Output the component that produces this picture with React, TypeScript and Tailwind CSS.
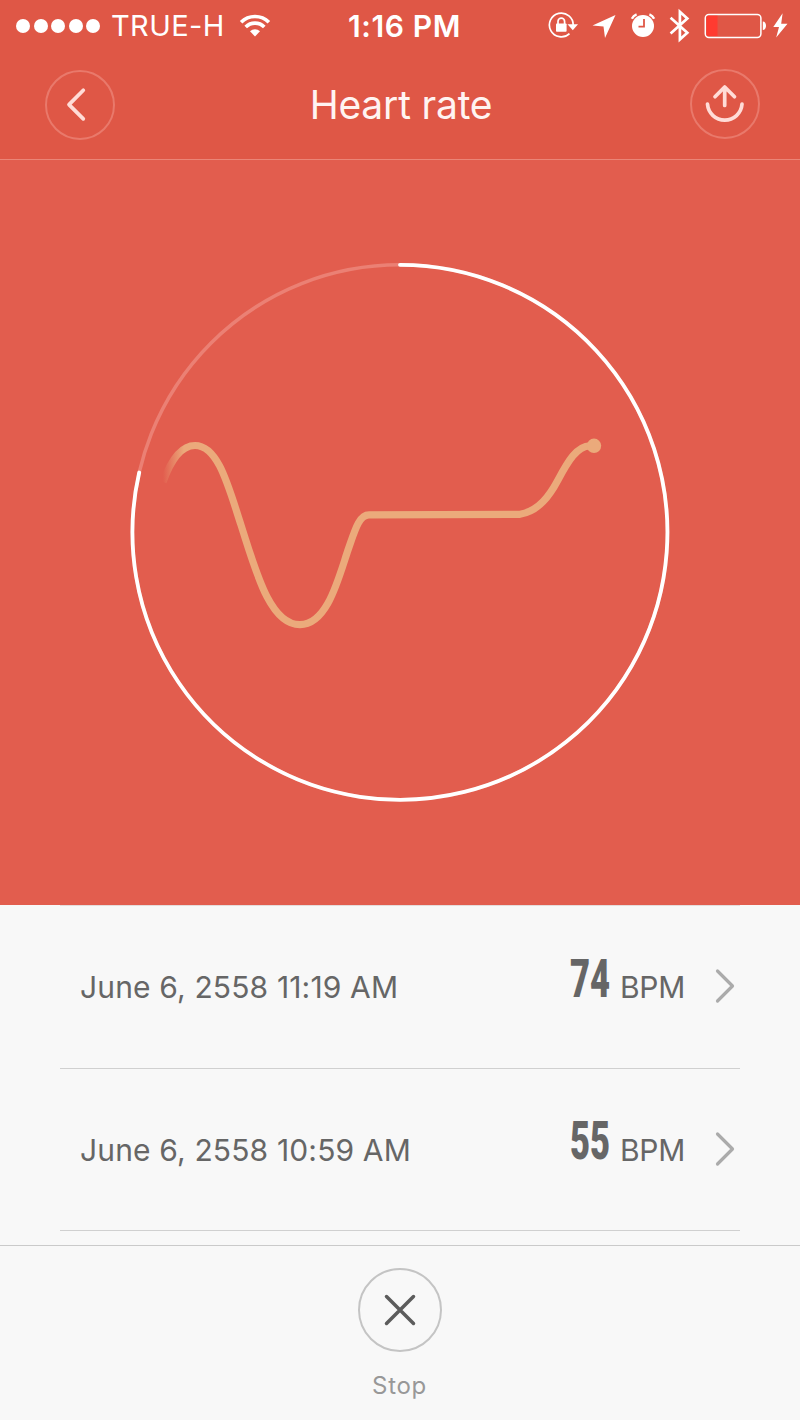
const readings = [
  { date: "June 6, 2558 11:19 AM", bpm: 74 },
  { date: "June 6, 2558 10:59 AM", bpm: 55 },
];

function StatusBar() {
  return (
    <div className="relative flex h-[51px] items-center justify-between pl-4 text-white">
      <div className="flex items-center">
        <div className="flex gap-[3.5px]">
          {[0, 1, 2, 3, 4].map((i) => (
            <span key={i} className="size-[14px] rounded-full bg-white" />
          ))}
        </div>
        <span className="ml-[11px] w-[128px] whitespace-nowrap text-[29px] leading-none tracking-[0.4px]">TRUE-H</span>
        <svg className="mt-[-2px]" width="32" height="24" viewBox="0 0 32 24" fill="none" stroke="white" strokeWidth="3.6">
          <path d="M2.1 9.3 A19.5 19.5 0 0 1 29.9 9.3" />
          <path d="M6.7 14 A13 13 0 0 1 25.3 14" />
          <path d="M11 18.2 A7.2 7.2 0 0 1 21 18.2 L16 23.4Z" fill="white" stroke="none" />
        </svg>
      </div>
      <span className="absolute left-[348px] whitespace-nowrap text-[30px] font-semibold leading-none tracking-[0.6px]">1:16 PM</span>
      <svg width="252" height="40" viewBox="0 0 252 40" fill="none" stroke="white">
        <path d="M21.5 27.6 A11.9 11.9 0 1 1 25.2 19.5" strokeWidth="1.7" />
        <path d="M19.5 18.2 H30 L24.8 24.2Z" fill="white" stroke="none" />
        <rect x="8" y="17.4" width="10.6" height="8.4" rx="0.8" fill="white" stroke="none" />
        <path d="M10 18 V15.5 a3.3 3.3 0 0 1 6.6 0 V18" strokeWidth="1.7" />
        <path d="M67.5 9 L44.5 19.4 L55.5 20.4 L57 32Z" fill="white" stroke="none" />
        <circle cx="95" cy="20" r="11" fill="white" stroke="none" />
        <path d="M83.9 12.7 A8 8 0 0 1 88.6 8.4 M101.4 8.4 A8 8 0 0 1 106.1 12.7" strokeWidth="2.4" />
        <path d="M96 13 V20.7 H90.5" stroke="#df5746" strokeWidth="1.8" />
        <path d="M122.6 11.7 L139.3 26.8 L131.9 33.4 V5.8 L139.3 12.4 L122.6 27.6" strokeWidth="2.7" />
        <rect x="157.3" y="8.4" width="55.6" height="23" rx="3.6" strokeWidth="1.5" />
        <path d="M160 9.8 H169.5 V30 H160 A1.5 1.5 0 0 1 158.5 28.5 V11.3 A1.5 1.5 0 0 1 160 9.8Z" fill="#ff3b30" stroke="none" />
        <path d="M214.8 15.6 c4.3 0 4.3 8.5 0 8.5Z" fill="white" stroke="none" />
        <path d="M234.6 7.3 L225.3 21 H231 L228.2 31.5 L239.5 17.8 H233.2Z" fill="white" stroke="none" />
      </svg>
    </div>
  );
}

function Header() {
  return (
    <header className="h-[160px] border-b border-[#eb8577] bg-[#df5746]">
      <StatusBar />
      <div className="flex items-start justify-between pl-[45px] pr-10 pt-[18px]">
        <button className="mt-px flex size-[70px] items-center justify-center rounded-full border-2 border-[#e9796b]">
          <svg width="70" height="70" viewBox="0 0 70 70" className="shrink-0" fill="none" stroke="#ffdcd7" strokeWidth="3.7" strokeLinecap="round" strokeLinejoin="round">
            <path d="M38.3 20.2 L24 34.6 L38.3 48.9" />
          </svg>
        </button>
        <h1 className="mr-[3px] mt-[15px] whitespace-nowrap text-[39px] leading-[42px] tracking-[-0.2px] text-[#fff4f2]">Heart rate</h1>
        <button className="flex size-[70px] items-center justify-center rounded-full border-2 border-[#e9796b]">
          <svg width="70" height="70" viewBox="0 0 70 70" className="shrink-0" fill="none" stroke="#ffdcd7" strokeWidth="3.7" strokeLinecap="round" strokeLinejoin="round">
            <path d="M34.7 36.5 V18.2 M25 27.8 L34.7 18 L44.5 27.8" />
            <path d="M17.5 35.2 A17.3 17.3 0 0 0 52 35.2" />
          </svg>
        </button>
      </div>
    </header>
  );
}

function PulseRing() {
  return (
    <section className="h-[745px] bg-[#e25d4e]">
      <svg width="800" height="745" viewBox="0 160 800 745" fill="none">
        <defs>
          <linearGradient id="fade" gradientUnits="userSpaceOnUse" x1="163" y1="0" x2="184" y2="0">
            <stop offset="0" stopColor="#ebaa7b" stopOpacity="0" />
            <stop offset="1" stopColor="#ebaa7b" />
          </linearGradient>
        </defs>
        <circle cx="400" cy="532.3" r="267.5" stroke="#eb8074" strokeWidth="3.5" />
        <path d="M400 264.8 A267.5 267.5 0 1 1 139.2 472.5" stroke="white" strokeWidth="3.8" strokeLinecap="round" />
        <path
          d="M163 482 C172 457 182 445.5 195 445.5 C218 445.5 228 485 241 525 C256 572 270 624.7 300 624.7 C327 624.7 338 580 348 550 C355 530 359 514.8 369 514.8 L520 514.3 C539 511 550 495 558 480 C568 461 577 446 590 445.8"
          stroke="url(#fade)"
          strokeWidth="7.2"
          strokeLinejoin="round"
        />
        <circle cx="594" cy="445.8" r="7.2" fill="#ebaa7b" />
      </svg>
    </section>
  );
}

function ReadingRow({ date, bpm }: { date: string; bpm: number }) {
  return (
    <li className="flex h-[162.5px] items-center border-b-[1.5px] border-[#d0d0d0] pl-5 pr-1 text-[#666]">
      <span className="mt-px flex-1 whitespace-nowrap text-[30px] leading-[40px] tracking-[0.15px]">{date}</span>
      <span className="w-[50px]">
        <span className="relative top-[-8px] block origin-left scale-x-[0.64] font-[Roboto] text-[54px] font-black leading-[60px]">{bpm}</span>
      </span>
      <span className="mt-px w-[94px] whitespace-nowrap text-[30px] leading-[40px] tracking-[-0.3px]">BPM</span>
      <svg className="mt-[-1px]" width="22" height="36" viewBox="0 0 22 36" fill="none" stroke="#ababab" strokeWidth="3.2" strokeLinecap="round" strokeLinejoin="round">
        <path d="M3.5 3 L18.5 18 L3.5 33" />
      </svg>
    </li>
  );
}

export default function App() {
  return (
    <div className="flex h-[1420px] w-[800px] flex-col overflow-hidden bg-[#f8f8f8] font-[Inter,sans-serif]">
      <Header />
      <PulseRing />
      <ul className="mx-[60px] h-[340px] shrink-0 overflow-hidden border-t border-[#e5dcdb]">
        {readings.map((r) => (
          <ReadingRow key={r.date} date={r.date} bpm={r.bpm} />
        ))}
      </ul>
      <footer className="flex flex-1 flex-col items-center border-t-[1.5px] border-[#cacaca] pr-px pt-[22px]">
        <button className="flex size-[84px] items-center justify-center rounded-full border-2 border-[#c4c4c4]">
          <svg width="34" height="34" viewBox="0 0 34 34" fill="none" stroke="#5c5c5c" strokeWidth="3.5" strokeLinecap="round">
            <path d="M3.5 3.5 L30.5 30.5 M30.5 3.5 L3.5 30.5" />
          </svg>
        </button>
        <span className="mt-[18px] text-[24px] leading-[32px] tracking-[0.7px] text-[#989898]">Stop</span>
      </footer>
    </div>
  );
}
